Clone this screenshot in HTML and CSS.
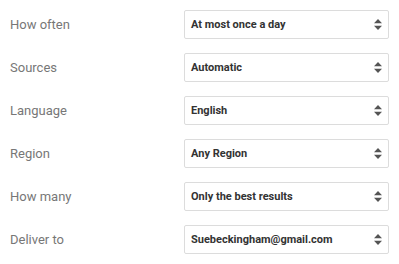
FILE: index.html
```html
<!DOCTYPE html>
<html>
<head>
<meta charset="utf-8">
<link rel="stylesheet" href="styles.css">
</head>
<body>
<div class="form">
  <div class="row"><div class="label">How often</div><div class="select"><span class="value">At most once a day</span><svg class="arrows" width="8" height="11" viewBox="0 0 8 11"><path d="M4 0L8 4.3H0Z M0 6.7H8L4 11Z" fill="#555"/></svg></div></div>
  <div class="row"><div class="label">Sources</div><div class="select"><span class="value">Automatic</span><svg class="arrows" width="8" height="11" viewBox="0 0 8 11"><path d="M4 0L8 4.3H0Z M0 6.7H8L4 11Z" fill="#555"/></svg></div></div>
  <div class="row"><div class="label">Language</div><div class="select"><span class="value">English</span><svg class="arrows" width="8" height="11" viewBox="0 0 8 11"><path d="M4 0L8 4.3H0Z M0 6.7H8L4 11Z" fill="#555"/></svg></div></div>
  <div class="row"><div class="label">Region</div><div class="select"><span class="value">Any Region</span><svg class="arrows" width="8" height="11" viewBox="0 0 8 11"><path d="M4 0L8 4.3H0Z M0 6.7H8L4 11Z" fill="#555"/></svg></div></div>
  <div class="row"><div class="label">How many</div><div class="select"><span class="value">Only the best results</span><svg class="arrows" width="8" height="11" viewBox="0 0 8 11"><path d="M4 0L8 4.3H0Z M0 6.7H8L4 11Z" fill="#555"/></svg></div></div>
  <div class="row"><div class="label">Deliver to</div><div class="select"><span class="value">Suebeckingham@gmail.com</span><svg class="arrows" width="8" height="11" viewBox="0 0 8 11"><path d="M4 0L8 4.3H0Z M0 6.7H8L4 11Z" fill="#555"/></svg></div></div>
</div>
</body>
</html>
```
FILE: styles.css
```css
html, body { margin: 0; padding: 0; background: #fff; }
body { font-family: Roboto, "Noto Sans", sans-serif; }
.form { display: flex; flex-direction: column; gap: 14px; padding: 10px 10px 0 10px; }
.row { display: flex; align-items: center; height: 29px; }
.label { width: 174px; font-size: 13px; color: #777; }
.select {
  box-sizing: border-box;
  width: 205px; height: 29px;
  border: 1px solid #dcdcdc; border-radius: 2px;
  display: flex; align-items: center; justify-content: space-between;
  padding: 0 6px 0 6px;
  font-size: 11px; font-weight: bold; color: #333;
}
.arrows { display: block; }
```
